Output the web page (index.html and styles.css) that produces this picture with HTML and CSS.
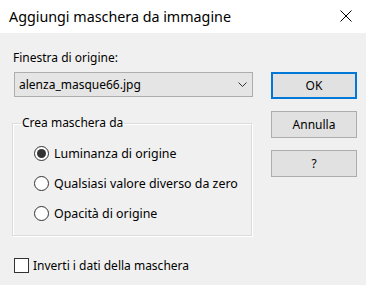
FILE: index.html
```html
<!DOCTYPE html>
<html lang="it">
<head>
    <meta charset="UTF-8">
    <title>Aggiungi maschera da immagine</title>
    <link rel="stylesheet" href="styles.css">
</head>
<body>
    <div class="dialog">
        <div class="titlebar">
            <span class="title">Aggiungi maschera da immagine</span>
            <svg class="close" width="12" height="12" viewBox="0 0 12 12">
                <path d="M0.5 0.5 L11.5 11.5 M11.5 0.5 L0.5 11.5" stroke="#000" stroke-width="1" fill="none"/>
            </svg>
        </div>

        <div class="content">
            <div class="left">
                <div class="label">Finestra di origine:</div>
                <div class="combo">
                    <span>alenza_masque66.jpg</span>
                    <svg width="9" height="5" viewBox="0 0 9 5">
                        <path d="M0.5 0.5 L4.5 4.5 L8.5 0.5" stroke="#333" stroke-width="1" fill="none"/>
                    </svg>
                </div>

                <fieldset class="group">
                    <legend>Crea maschera da</legend>
                    <div class="options">
                        <div class="option"><span class="radio checked"></span>Luminanza di origine</div>
                        <div class="option"><span class="radio"></span>Qualsiasi valore diverso da zero</div>
                        <div class="option"><span class="radio"></span>Opacità di origine</div>
                    </div>
                </fieldset>

                <div class="check-row"><span class="checkbox"></span>Inverti i dati della maschera</div>
            </div>

            <div class="buttons">
                <div class="btn default">OK</div>
                <div class="btn">Annulla</div>
                <div class="btn">?</div>
            </div>
        </div>
    </div>
</body>
</html>
```

FILE: styles.css
```css
body {
    margin: 0;
    font-family: "Noto Sans", "Open Sans", sans-serif;
    font-size: 12px;
    color: #000;
    background-color: #f0f0f0;
}
.dialog {
    width: 366px;
    height: 285px;
    overflow: hidden;
}
.titlebar {
    height: 33px;
    background-color: #fff;
    display: flex;
    align-items: center;
    justify-content: space-between;
    padding: 0 14px 0 9px;
}
.title {
    font-size: 14.3px;
}
.close {
    display: block;
    margin-top: -1px;
}
.content {
    display: flex;
    padding: 17px 0 0 12px;
}
.left {
    width: 241px;
}
.label {
    line-height: 16px;
    padding-left: 1px;
    margin-bottom: 6px;
}
.combo {
    margin-left: 2px;
    width: 239px;
    height: 25px;
    box-sizing: border-box;
    border: 1px solid #adadad;
    background-color: #e5e5e5;
    display: flex;
    align-items: center;
    justify-content: space-between;
    padding: 0 5px 0 4px;
}
.combo span {
    line-height: 16px;
}
.group {
    margin: 18px 0 0 0;
    width: 240px;
    box-sizing: border-box;
    border: 1px solid #dcdcdc;
    box-shadow: 1px 1px 0 #fff, inset 1px 1px 0 #fff;
    padding: 7px 0 7px 8px;
}
.group legend {
    padding: 0 1px;
    line-height: 16px;
}
.options {
    margin-left: 13px;
}
.option {
    height: 30px;
    display: flex;
    align-items: center;
    font-size: 12.4px;
}
.radio {
    width: 15px;
    height: 15px;
    box-sizing: border-box;
    border: 1px solid #333;
    border-radius: 50%;
    background-color: #fff;
    margin-right: 5px;
    display: flex;
    align-items: center;
    justify-content: center;
}
.radio.checked::after {
    content: "";
    width: 9px;
    height: 9px;
    border-radius: 50%;
    background-color: #333;
}
.check-row {
    margin: 21px 0 0 2px;
    display: flex;
    align-items: center;
}
.checkbox {
    width: 15px;
    height: 15px;
    box-sizing: border-box;
    border: 1px solid #333;
    background-color: #fff;
    margin-right: 4px;
}
.buttons {
    margin-left: 18px;
    padding-top: 22px;
    display: flex;
    flex-direction: column;
    gap: 12px;
}
.btn {
    width: 86px;
    height: 27px;
    box-sizing: border-box;
    border: 1px solid #adadad;
    background-color: #e1e1e1;
    display: flex;
    align-items: center;
    justify-content: center;
}
.btn.default {
    border: 2px solid #0078d7;
}
```
